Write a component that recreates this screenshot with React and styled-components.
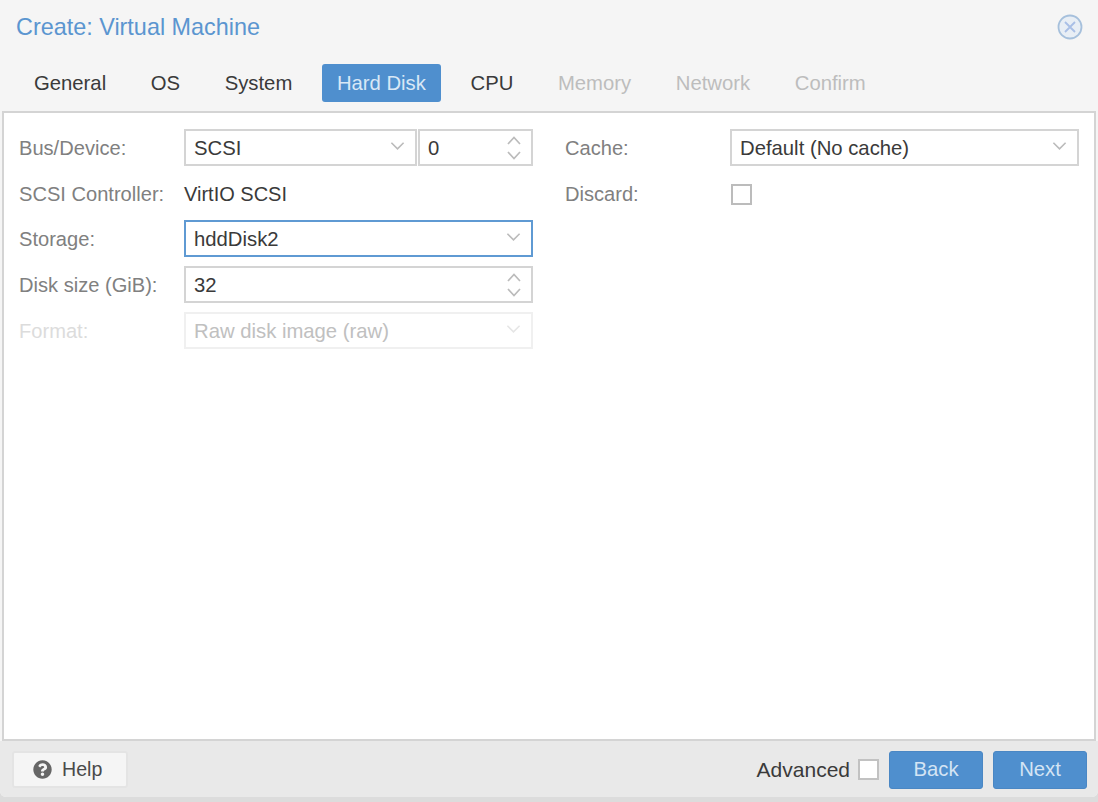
import styled, { createGlobalStyle } from 'styled-components';
import { FaQuestionCircle } from 'react-icons/fa';

const TABS = [
  { label: 'General' },
  { label: 'OS' },
  { label: 'System' },
  { label: 'Hard Disk', active: true },
  { label: 'CPU' },
  { label: 'Memory', disabled: true },
  { label: 'Network', disabled: true },
  { label: 'Confirm', disabled: true },
];

function Chevron({ faded }) {
  return (
    <ChevronIcon viewBox="0 0 16 10" $faded={faded}>
      <path d="M1.5 1.5 L8 8 L14.5 1.5" />
    </ChevronIcon>
  );
}

function Spinner() {
  return (
    <SpinnerIcon viewBox="0 0 16 26">
      <path d="M2 9 L8 2.5 L14 9" />
      <path d="M2 17 L8 23.5 L14 17" />
    </SpinnerIcon>
  );
}

function CloseIcon() {
  return (
    <CloseSvg viewBox="0 0 26 26">
      <circle cx="13" cy="13" r="11.5" fill="#e8eef5" stroke="#a6c0dc" strokeWidth="1.8" />
      <path d="M8 8 L18 18 M18 8 L8 18" stroke="#a9bfe6" strokeWidth="1.8" fill="none" />
    </CloseSvg>
  );
}

export default function App() {
  return (
    <>
      <GlobalStyle />
      <Window>
        <Header>
          <Title>Create: Virtual Machine</Title>
          <CloseIcon />
        </Header>
        <TabBar>
          {TABS.map((tab) => (
            <Tab key={tab.label} $active={tab.active} $disabled={tab.disabled}>
              {tab.label}
            </Tab>
          ))}
        </TabBar>
        <Panel>
          <Column>
            <Row>
              <Label>Bus/Device:</Label>
              <FieldGroup>
                <Field $grow>
                  <span>SCSI</span>
                  <Chevron />
                </Field>
                <Field $narrow>
                  <span>0</span>
                  <Spinner />
                </Field>
              </FieldGroup>
            </Row>
            <Row $compact>
              <Label>SCSI Controller:</Label>
              <Value>VirtIO SCSI</Value>
            </Row>
            <Row>
              <Label>Storage:</Label>
              <Field $focused>
                <span>hddDisk2</span>
                <Chevron />
              </Field>
            </Row>
            <Row>
              <Label>Disk size (GiB):</Label>
              <Field>
                <span>32</span>
                <Spinner />
              </Field>
            </Row>
            <Row>
              <Label $disabled>Format:</Label>
              <Field $disabled>
                <span>Raw disk image (raw)</span>
                <Chevron faded />
              </Field>
            </Row>
          </Column>
          <Column>
            <Row>
              <Label>Cache:</Label>
              <Field>
                <span>Default (No cache)</span>
                <Chevron />
              </Field>
            </Row>
            <Row $compact>
              <Label>Discard:</Label>
              <Check />
            </Row>
          </Column>
        </Panel>
        <Footer>
          <HelpButton>
            <FaQuestionCircle size={19} color="#666" />
            <span>Help</span>
          </HelpButton>
          <FooterRight>
            <AdvancedLabel>Advanced</AdvancedLabel>
            <Check $footer />
            <PrimaryButton>Back</PrimaryButton>
            <PrimaryButton>Next</PrimaryButton>
          </FooterRight>
        </Footer>
      </Window>
    </>
  );
}

const GlobalStyle = createGlobalStyle`
  html, body {
    margin: 0;
    padding: 0;
    background: #dcdcdc;
  }
  * {
    box-sizing: border-box;
  }
`;

const Window = styled.div`
  width: 1098px;
  height: 797px;
  display: flex;
  flex-direction: column;
  background: #f5f5f5;
  font-family: 'Liberation Sans', Arial, sans-serif;
  font-size: 20.3px;
  color: #3a3a3a;
  border-radius: 0 0 6px 6px;
  overflow: hidden;
`;

const Header = styled.div`
  height: 54px;
  padding: 0 15px 0 16px;
  display: flex;
  align-items: center;
  justify-content: space-between;
`;

const Title = styled.div`
  font-size: 23.4px;
  color: #5b95d0;
`;

const CloseSvg = styled.svg`
  width: 26px;
  height: 26px;
`;

const TabBar = styled.div`
  height: 57px;
  padding: 10px 0 9px 19px;
  display: flex;
  gap: 14.6px;
`;

const Tab = styled.div`
  height: 38px;
  padding: 0 15px;
  display: flex;
  align-items: center;
  border-radius: 3px;
  background: ${(p) => (p.$active ? '#4f8fce' : 'transparent')};
  color: ${(p) => (p.$active ? '#d9e8f6' : p.$disabled ? '#bdbdbd' : '#3a3a3a')};
`;

const Panel = styled.div`
  flex: 1;
  margin: 0 2px;
  padding: 16px 16px 0 15px;
  background: #fff;
  border: 2px solid #d4d4d4;
  display: grid;
  grid-template-columns: 514px 514px;
  column-gap: 32px;
  align-content: start;
`;

const Column = styled.div`
  display: flex;
  flex-direction: column;
  gap: 9px;
`;

const Row = styled.div`
  height: ${(p) => (p.$compact ? '36px' : '37px')};
  display: grid;
  grid-template-columns: 165px 349px;
  align-items: center;
`;

const Label = styled.div`
  padding-top: 2px;
  font-size: 20.1px;
  color: ${(p) => (p.$disabled ? '#dcdcdc' : '#808080')};
`;

const Value = styled.div`
  padding-top: 2px;
  font-size: 20px;
  color: #3a3a3a;
`;

const FieldGroup = styled.div`
  display: flex;
  gap: 1px;
`;

const Field = styled.div`
  height: 37px;
  padding: 2px 8px 0;
  display: flex;
  align-items: center;
  justify-content: space-between;
  background: #fff;
  border: 2px solid ${(p) => (p.$focused ? '#5f9ad3' : p.$disabled ? '#f0f0f0' : '#d4d4d4')};
  color: ${(p) => (p.$disabled ? '#c0c0c0' : '#3a3a3a')};
  ${(p) => p.$grow && 'flex: 1;'}
  ${(p) => p.$narrow && 'width: 115px;'}
`;

const ChevronIcon = styled.svg`
  width: 15px;
  height: 10px;
  margin: 0 2px 5px 0;
  fill: none;
  stroke: ${(p) => (p.$faded ? '#e6e6e6' : '#bbb')};
  stroke-width: 1.7;
`;

const SpinnerIcon = styled.svg`
  width: 16px;
  height: 26px;
  margin: 0 1px 2px 0;
  fill: none;
  stroke: #bbb;
  stroke-width: 1.7;
`;

const Check = styled.div`
  width: 21px;
  height: 21px;
  background: #fff;
  border: 2px solid ${(p) => (p.$footer ? '#c2c2c2' : '#bcbcbc')};
  ${(p) => !p.$footer && 'margin-left: 1px; margin-top: 2px;'}
`;

const Footer = styled.div`
  height: 56px;
  padding: 10px 11px 9px 12px;
  display: flex;
  align-items: center;
  justify-content: space-between;
  background: #e9e9e9;
`;

const HelpButton = styled.div`
  width: 116px;
  height: 37px;
  padding-left: 19px;
  display: flex;
  align-items: center;
  gap: 10px;
  background: #f5f5f5;
  border: 2px solid #e4e4e4;
  border-radius: 3px;
  font-size: 19.6px;
  color: #4a4a4a;
`;

const FooterRight = styled.div`
  display: flex;
  align-items: center;
`;

const AdvancedLabel = styled.div`
  margin-right: 8px;
  font-size: 21px;
  color: #3a3a3a;
`;

const PrimaryButton = styled.div`
  width: 94px;
  height: 38px;
  margin-left: 10px;
  display: flex;
  align-items: center;
  justify-content: center;
  background: #4f8fce;
  border: 1px solid #4a87c4;
  border-radius: 3px;
  color: #d4e4f4;
`;
